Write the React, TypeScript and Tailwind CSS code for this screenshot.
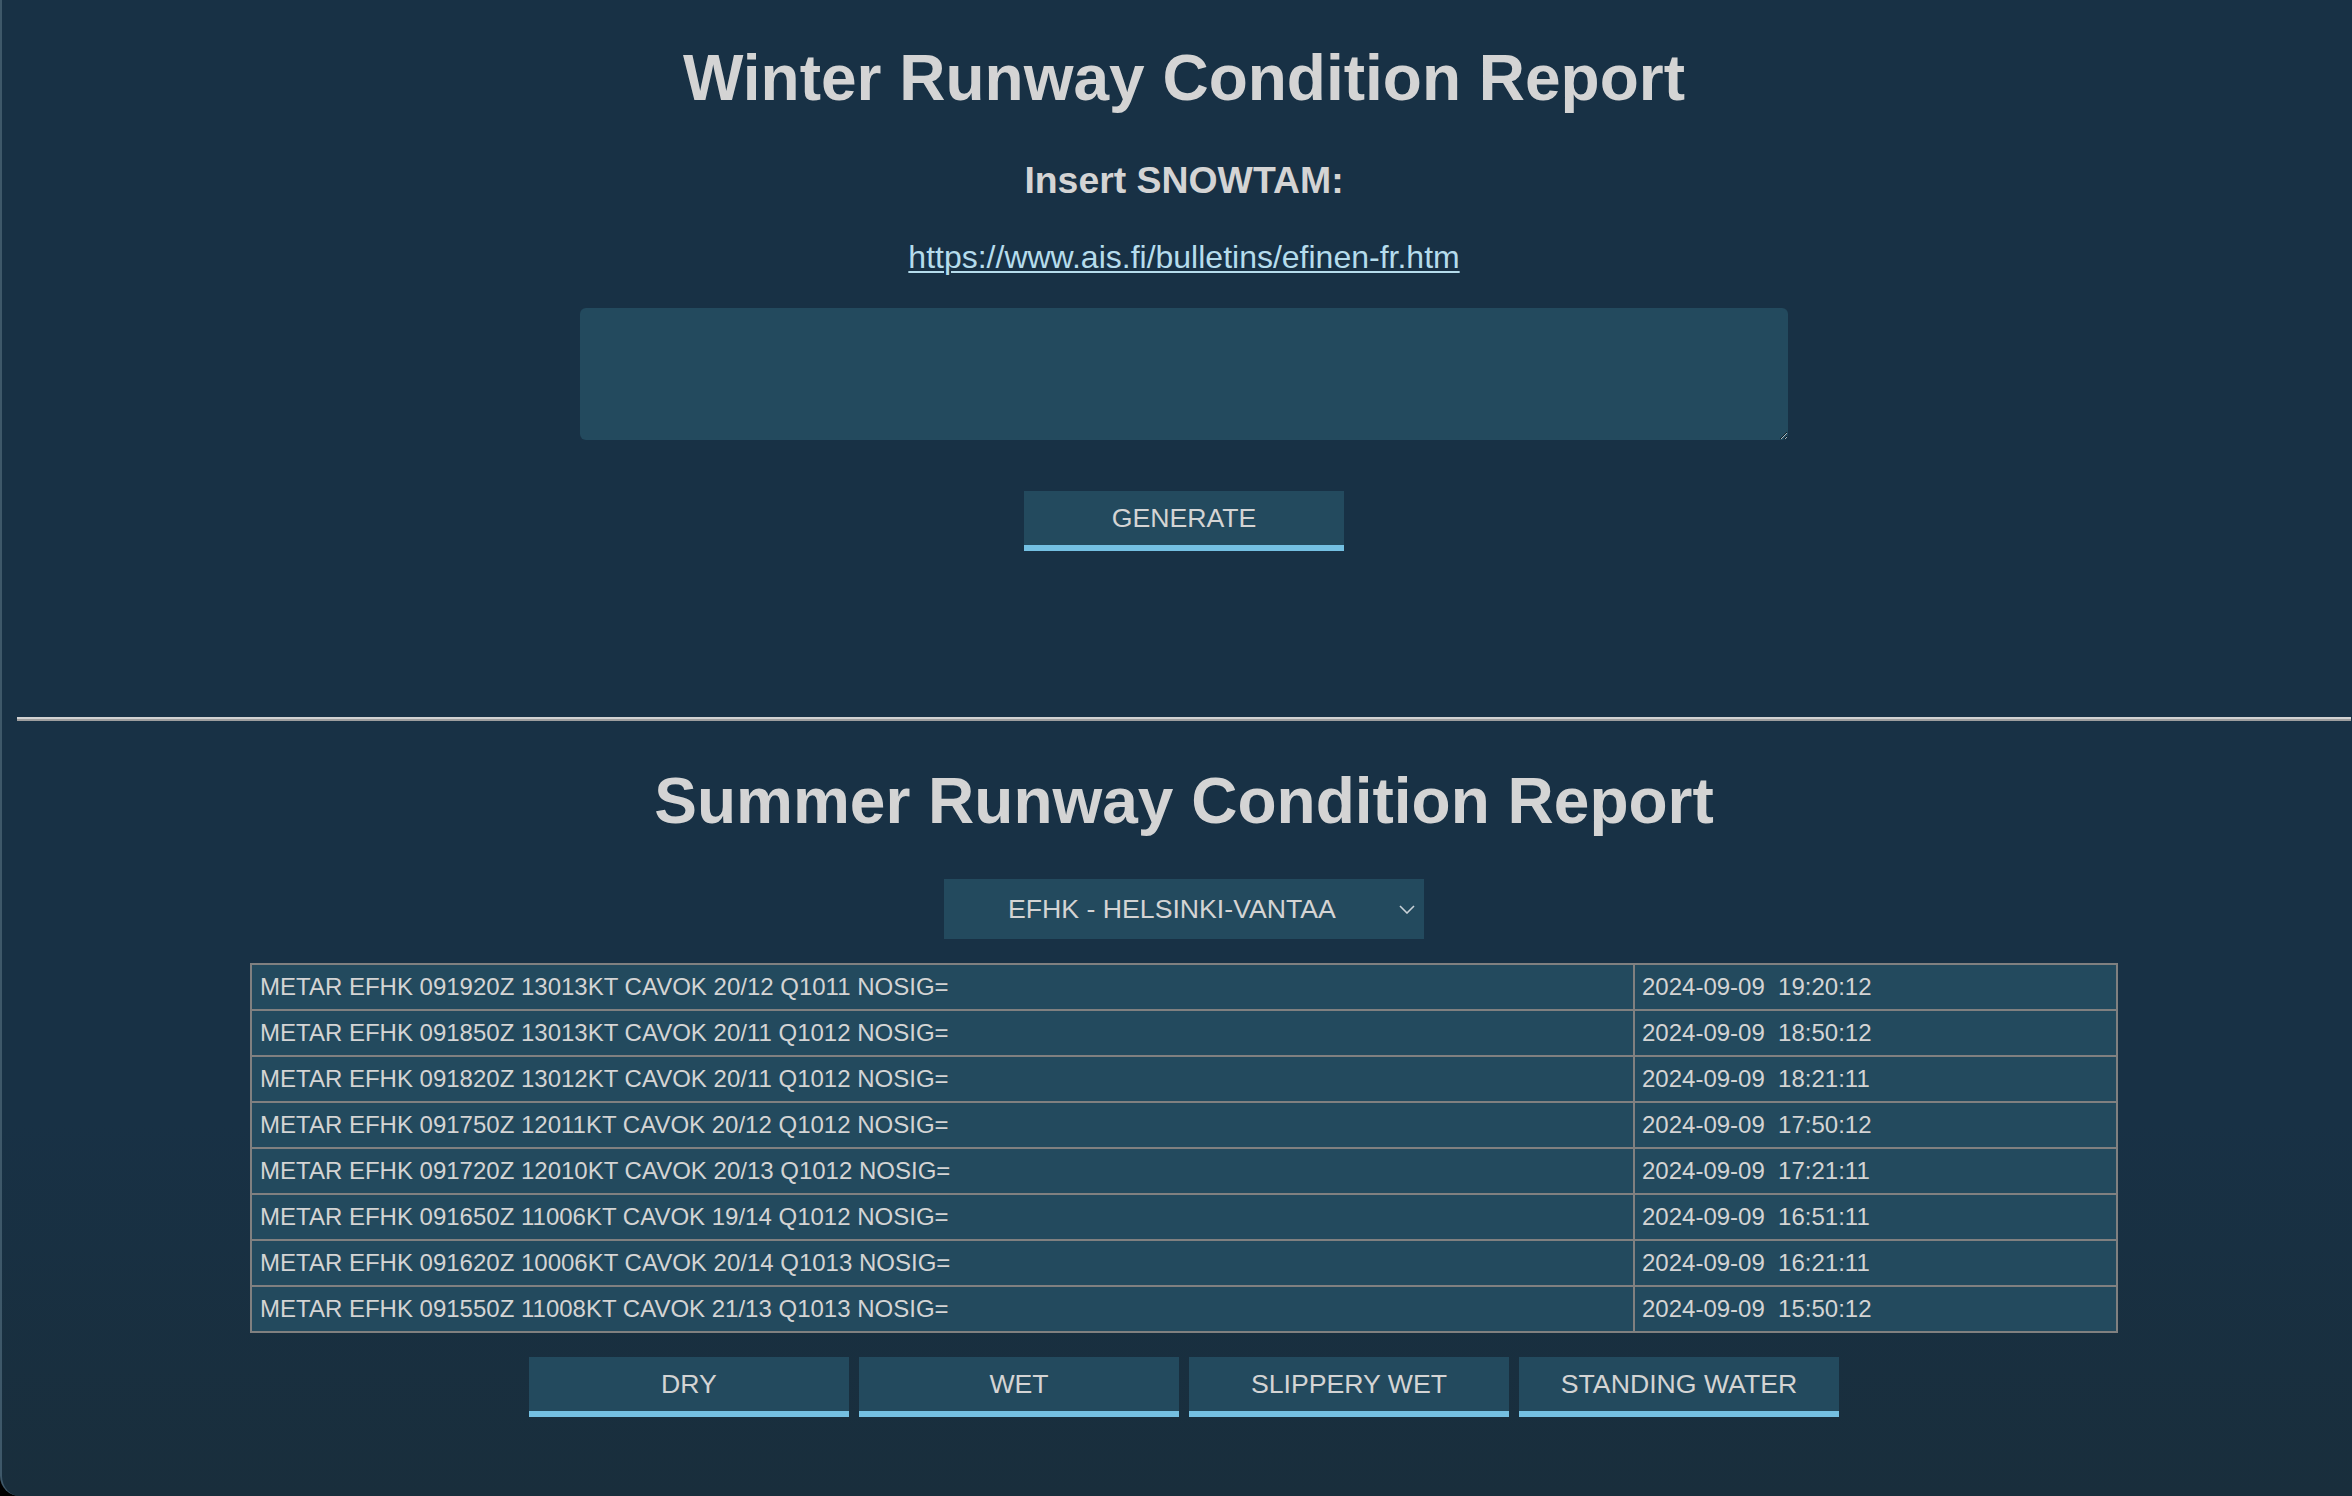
import React from "react";

const rows: [string, string][] = [
  ["METAR EFHK 091920Z 13013KT CAVOK 20/12 Q1011 NOSIG=", "2024-09-09  19:20:12"],
  ["METAR EFHK 091850Z 13013KT CAVOK 20/11 Q1012 NOSIG=", "2024-09-09  18:50:12"],
  ["METAR EFHK 091820Z 13012KT CAVOK 20/11 Q1012 NOSIG=", "2024-09-09  18:21:11"],
  ["METAR EFHK 091750Z 12011KT CAVOK 20/12 Q1012 NOSIG=", "2024-09-09  17:50:12"],
  ["METAR EFHK 091720Z 12010KT CAVOK 20/13 Q1012 NOSIG=", "2024-09-09  17:21:11"],
  ["METAR EFHK 091650Z 11006KT CAVOK 19/14 Q1012 NOSIG=", "2024-09-09  16:51:11"],
  ["METAR EFHK 091620Z 10006KT CAVOK 20/14 Q1013 NOSIG=", "2024-09-09  16:21:11"],
  ["METAR EFHK 091550Z 11008KT CAVOK 21/13 Q1013 NOSIG=", "2024-09-09  15:50:12"],
];

function Btn({ label }: { label: string }) {
  return (
    <button className="w-[320px] h-[60px] bg-[#234a5e] border-b-[6px] border-[#74c0e2] flex items-center justify-center text-[26.67px] leading-none text-[#d4d4d4]">
      {label}
    </button>
  );
}

export default function App() {
  return (
    <div className="w-[2352px] h-[1496px] bg-black overflow-hidden">
      <div
        className="w-full h-full rounded-bl-[20px] border-l-2 border-[#3e5869] pl-[15px] pr-[1px] bg-linear-to-b from-[#183145] via-[#183145] via-75% to-[#192e3c] text-[#d4d4d4] flex flex-col items-center"
        style={{ fontFamily: '"Liberation Sans", Arial, Helvetica, sans-serif' }}
      >
        <h1 className="mt-[46px] text-[64px] leading-[64px] font-bold">Winter Runway Condition Report</h1>
        <h3 className="mt-[52px] text-[37.4px] leading-[37px] font-bold">Insert SNOWTAM:</h3>
        <a
          href="#"
          className="mt-[42px] text-[32px] leading-[32px] text-[#b5dcec] underline decoration-2 underline-offset-[3px]"
        >
          https://www.ais.fi/bulletins/efinen-fr.htm
        </a>
        <textarea className="mt-[35px] w-[1208px] h-[132px] rounded-[6px] bg-[#234a5e] border-0 outline-none text-[26px] p-2" />
        <div className="mt-[51px]">
          <Btn label="GENERATE" />
        </div>
        <div className="mt-[166px] w-full h-[4px] border-t-2 border-t-[#d2d2d2] border-b-2 border-b-[#9e9e9e]" />
        <h1 className="mt-[48px] text-[64px] leading-[64px] font-bold">Summer Runway Condition Report</h1>
        <div className="mt-[46px] w-[480px] h-[60px] bg-[#234a5e] flex items-center pl-[64px] pr-[8px] text-[26.67px] leading-none text-[#d4d4d4]">
          <span className="flex-1">EFHK - HELSINKI-VANTAA</span>
          <svg width="16" height="9" viewBox="0 0 16 9" className="mr-[1px]">
            <path d="M1 1 L8 8 L15 1" fill="none" stroke="#c9d2d8" strokeWidth="1.6" />
          </svg>
        </div>
        <div className="mt-[24px] w-[1868px] border-l-2 border-t-2 border-[#808080] grid grid-cols-[1383px_483px]">
          {rows.map(([m, d], i) => (
            <React.Fragment key={i}>
              <div className="h-[46px] bg-[#234a5e] border-r-2 border-b-2 border-[#808080] pl-[8px] flex items-center text-[24px] leading-none">
                {m}
              </div>
              <div className="h-[46px] bg-[#234a5e] border-r-2 border-b-2 border-[#808080] pl-[7px] flex items-center text-[24px] leading-none whitespace-pre">
                {d}
              </div>
            </React.Fragment>
          ))}
        </div>
        <div className="mt-[24px] flex gap-[10px]">
          <Btn label="DRY" />
          <Btn label="WET" />
          <Btn label="SLIPPERY WET" />
          <Btn label="STANDING WATER" />
        </div>
      </div>
    </div>
  );
}
